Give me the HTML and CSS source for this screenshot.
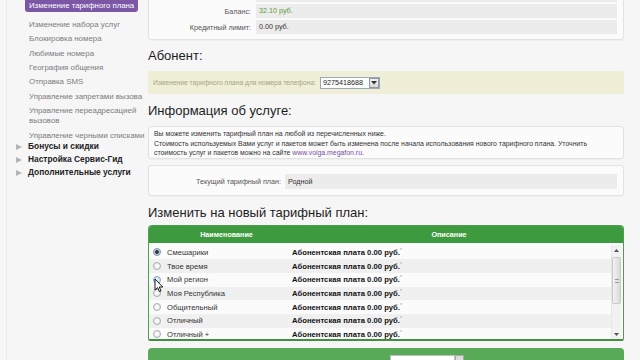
FILE: index.html
```html
<!DOCTYPE html>
<html lang="ru">
<head>
<meta charset="utf-8">
<title>Изменение тарифного плана</title>
<link rel="stylesheet" href="styles.css">
</head>
<body>
<div class="page">
  <aside class="side">
    <div class="active">Изменение тарифного плана</div>
    <ul class="sub">
      <li>Изменение набора услуг</li>
      <li>Блокировка номера</li>
      <li>Любимые номера</li>
      <li>География общения</li>
      <li>Отправка SMS</li>
      <li>Управление запретами вызова</li>
      <li>Управление переадресацией<br>вызовов</li>
      <li>Управление черными списками</li>
    </ul>
    <ul class="groups">
      <li><span class="tri"></span>Бонусы и скидки</li>
      <li><span class="tri"></span>Настройка Сервис-Гид</li>
      <li><span class="tri"></span>Дополнительные услуги</li>
    </ul>
  </aside>
  <main class="main">
    <div class="card balance">
      <div class="row"><span class="lbl"></span><span class="val"></span></div>
      <div class="row"><span class="lbl">Баланс:</span><span class="val green">32.10 руб.</span></div>
      <div class="row"><span class="lbl">Кредитный лимит:</span><span class="val">0.00 руб.</span></div>
    </div>

    <h2>Абонент:</h2>
    <div class="band">
      <span class="band-lbl">Изменение тарифного плана для номера телефона:</span>
      <span class="select"><span class="sel-val">9275418688</span><span class="sel-btn"><svg width="6" height="4" viewBox="0 0 6 4"><path d="M0 0H6L3 3.5Z" fill="#333"/></svg></span></span>
    </div>

    <h2 class="h-info">Информация об услуге:</h2>
    <div class="card info">
      <p>Вы можете изменить тарифный план на любой из перечисленных ниже.</p>
      <p>Стоимость используемых Вами услуг и пакетов может быть изменена после начала использования нового тарифного плана. Уточнить</p>
      <p>стоимость услуг и пакетов можно на сайте <a href="#">www.volga.megafon.ru</a>.</p>
    </div>

    <div class="card current">
      <div class="row cur-row"><span class="lbl">Текущий тарифный план:</span><span class="val">Родной</span></div>
    </div>

    <h2 class="h-new">Изменить на новый тарифный план:</h2>
    <div class="table">
      <div class="thead"><span class="c1">Наименование</span><span class="c2">Описание</span></div>
      <div class="tbody">
        <div class="rows">
          <div class="tr"><span class="radio on"></span><span class="name">Смешарики</span><span class="desc">Абонентская плата 0.00 руб.<sup>*</sup></span></div>
          <div class="tr"><span class="radio"></span><span class="name">Твое время</span><span class="desc">Абонентская плата 0.00 руб.<sup>*</sup></span></div>
          <div class="tr"><span class="radio hover"></span><span class="name">Мой регион</span><span class="desc">Абонентская плата 0.00 руб.<sup>*</sup></span></div>
          <div class="tr"><span class="radio"></span><span class="name">Моя Республика</span><span class="desc">Абонентская плата 0.00 руб.<sup>*</sup></span></div>
          <div class="tr"><span class="radio"></span><span class="name">Общительный</span><span class="desc">Абонентская плата 0.00 руб.<sup>*</sup></span></div>
          <div class="tr"><span class="radio"></span><span class="name">Отличный</span><span class="desc">Абонентская плата 0.00 руб.<sup>*</sup></span></div>
          <div class="tr"><span class="radio"></span><span class="name">Отличный +</span><span class="desc">Абонентская плата 0.00 руб.<sup>*</sup></span></div>
        </div>
        <div class="scroll">
          <span class="sb-btn"><svg width="5" height="3" viewBox="0 0 5 3"><path d="M0 3L2.5 0L5 3Z" fill="#555"/></svg></span>
          <span class="thumb"><span class="grip"></span></span>
          <span class="sb-track"></span>
          <span class="sb-btn"><svg width="5" height="3" viewBox="0 0 5 3"><path d="M0 0L2.5 3L5 0Z" fill="#555"/></svg></span>
        </div>
      </div>
    </div>

    <div class="bar">
      <span class="bar-input"></span><span class="bar-btn"></span>
    </div>
  </main>
</div>
<svg class="cursor" width="10" height="15" viewBox="0 0 10 15"><path d="M1 1V12L3.6 9.6L5.4 13.6L7 12.9L5.3 9H8.8Z" fill="#fff" stroke="#000" stroke-width="0.9" stroke-linejoin="round"/></svg>
</body>
</html>
```

FILE: styles.css
```css
* { box-sizing: border-box; margin: 0; padding: 0; }
html, body { width: 640px; height: 360px; overflow: hidden; }
body {
  background: #f6f6f6;
  font-family: "Liberation Sans", Arial, sans-serif;
  color: #222;
  position: relative;
}
.page { display: flex; align-items: flex-start; }

/* sidebar */
.side {
  flex: none;
  width: 142px;
  margin-left: 6px;
  height: 360px;
  border-left: 1px solid #ebebeb;
  padding-left: 18px;
}
.active {
  margin-top: -2px;
  width: 113px;
  height: 14px;
  line-height: 15px;
  padding: 0 3px 0 4px;
  background: #7b57a6;
  color: #fff;
  font-size: 7.8px;
  border-radius: 3px;
  white-space: nowrap;
  overflow: hidden;
}
.sub { list-style: none; margin-top: 5.8px; padding-left: 4px; }
.sub li {
  font-size: 7.9px;
  line-height: 10px;
  padding: 2.2px 0;
  color: #7c7c7c;
  white-space: nowrap;
}
.groups { list-style: none; margin: -2.5px 0 0 -9px; }
.groups li {
  display: flex;
  align-items: center;
  gap: 6px;
  font-size: 8.4px;
  font-weight: bold;
  line-height: 13px;
  color: #222;
  white-space: nowrap;
}
.tri {
  width: 0; height: 0;
  border-left: 6px solid #b4b4b4;
  border-top: 3.5px solid transparent;
  border-bottom: 3.5px solid transparent;
}

/* main */
.main { flex: none; width: 476px; }
.card {
  background: #fbfbfb;
  border: 1px solid #e2e2e2;
  border-radius: 3px;
  box-shadow: 0 1px 1px rgba(0,0,0,0.03);
}
.row { display: flex; align-items: center; font-size: 7.2px; }
.lbl { text-align: right; color: #555; white-space: nowrap; }
.val { flex: 1; background: #ececec; padding-left: 3px; color: #333; }
.green { color: #5e9a3a; }

.balance {
  margin-top: -17px;
  padding: 4px 6px 5px;
  display: flex;
  flex-direction: column;
  gap: 2px;
}
.balance .row { height: 14px; }
.balance .lbl { width: 96px; }
.balance .val { margin-left: 5px; height: 14px; line-height: 14px; }

h2 {
  font-size: 13px;
  font-weight: normal;
  line-height: 17px;
  margin: 7px 0;
  color: #1d1d1d;
}
.h-info { margin-top: 8px; }
.h-new { margin: 8px 0 4px; }

.band {
  height: 23px;
  background: #efefd8;
  border-radius: 2px;
  display: flex;
  align-items: center;
  padding-left: 5px;
}
.band-lbl { width: 167px; font-size: 6.7px; color: #a6a57c; white-space: nowrap; }
.select {
  width: 60px;
  height: 12px;
  background: #fff;
  border: 1px solid #9ba8b6;
  display: flex;
  align-items: center;
}
.sel-val { font-size: 7.2px; color: #222; padding-left: 2px; }
.sel-btn {
  margin-left: auto;
  width: 10px;
  height: 10px;
  background: linear-gradient(#f4f4f4, #d8d8d8);
  border: 1px solid #8e9aa8;
  display: flex;
  align-items: center;
  justify-content: center;
}

.info {
  height: 33px;
  padding: 2px 5px 1px;
  font-size: 6.9px;
  line-height: 9.5px;
  color: #333;
  white-space: nowrap;
}
.info a { color: #7a4fa6; text-decoration: none; }

.current { margin-top: 6px; height: 31px; padding: 8px 6px 0; }
.cur-row { height: 15px; }
.current .lbl { width: 126px; }
.current .val { margin-left: 4px; height: 15px; line-height: 15px; }

/* table */
.table {
  border: 1px solid #4c9f4c;
  border-bottom: 2px solid #3f903f;
  border-radius: 4px 4px 2px 2px;
  overflow: hidden;
  background: #fafafa;
}
.thead {
  height: 17px;
  background: #3e9a3e;
  display: flex;
  align-items: center;
  color: #fff;
  font-weight: bold;
  font-size: 7.2px;
}
.c1 { width: 155px; text-align: center; }
.c2 { width: 290px; text-align: center; }
.tbody { display: flex; height: 96px; }
.rows { flex: 1; padding-top: 2.5px; overflow: hidden; }
.tr { height: 13.7px; display: flex; align-items: center; font-size: 7.6px; background: #fbfbfb; }
.tr:nth-child(even) { background: #f0f0f0; }
.radio {
  flex: none;
  width: 8px; height: 8px;
  margin-left: 4px;
  border-radius: 50%;
  border: 1px solid #ababab;
  background: radial-gradient(circle, #fff 0, #e4e4e4 100%);
}
.radio.on {
  border-color: #7b8fa6;
  background: radial-gradient(circle, #34404e 0 1.6px, #b9cde2 2.2px, #eaf1f8 100%);
}
.radio.hover { border-color: #7ea3c7; background: radial-gradient(circle, #eaf4fd 0, #c5dcf1 100%); }
.name { flex: none; width: 125px; margin-left: 6px; color: #333; white-space: nowrap; }
.desc { font-weight: bold; font-size: 7.7px; color: #111; white-space: nowrap; }
.desc sup { color: #9a9a9a; font-weight: normal; font-size: 5px; vertical-align: top; position: relative; top: -1px; }

.scroll {
  flex: none;
  width: 10px;
  margin: 2px 2px 0 0;
  display: flex;
  flex-direction: column;
  background: #f1f1f1;
  border-left: 1px solid #e6e6e6;
}
.sb-btn { height: 10px; display: flex; align-items: center; justify-content: center; }
.thumb {
  margin-top: 2px;
  height: 47px;
  background: linear-gradient(90deg, #f2f2f2, #dadada);
  border: 1px solid #c9c9c9;
  border-radius: 2px;
  display: flex;
  align-items: center;
  justify-content: center;
}
.grip { width: 4px; height: 4px; border-top: 1px solid #999; border-bottom: 1px solid #999; }
.sb-track { flex: 1; }

.bar {
  margin-top: 7px;
  height: 20px;
  background: #58a958;
  border-radius: 4px 4px 0 0;
  display: flex;
  padding: 7px 0 0 242px;
}
.bar-input { width: 65px; height: 12px; background: #fff; border: 1px solid #b6c4b6; }
.bar-btn { width: 9px; height: 12px; background: #dcdcdc; border: 1px solid #aaa; }

.cursor { position: absolute; left: 154px; top: 278px; }
```
